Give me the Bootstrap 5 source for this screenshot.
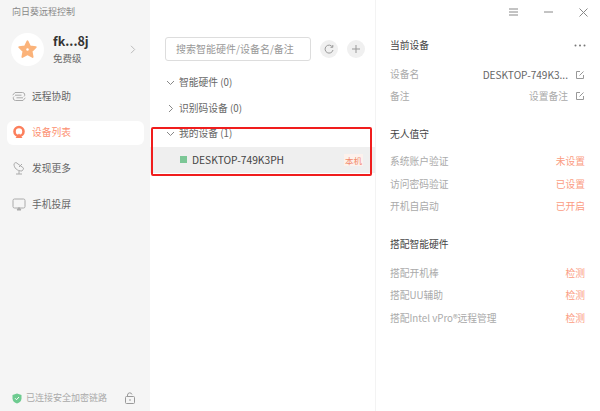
<!DOCTYPE html>
<html lang="zh">
<head>
<meta charset="utf-8">
<title>向日葵远程控制</title>
<link href="https://cdn.jsdelivr.net/npm/bootstrap@5.3.0/dist/css/bootstrap.min.css" rel="stylesheet">
<style>
html,body{width:600px;height:411px;overflow:hidden;margin:0;background:#fff}
body{font-family:"Noto Sans CJK SC","Noto Sans",sans-serif;font-size:10px;color:#555}
.shell{width:600px;height:411px;position:relative}
.side{width:150px;background:#f5f5f5;padding:6px 0 0 0}
.apptitle{font-size:9px;color:#888;padding-left:12px;line-height:12px}
.profile{padding:15px 12px 0 11px;height:57px}
.avatar{width:33px;height:33px;border-radius:50%;background:#fff;margin-right:1px}
.uname{font-size:12.5px;font-weight:700;color:#333;line-height:16px}
.ulevel{font-size:9.5px;color:#666;line-height:13px;margin-top:3px}
.chev{margin:12px 2px 0 0}
.navside{padding:0 6px 0 7px;margin-top:10px;gap:12px}
.navrow{height:24px;padding:0 0 2px 5px;gap:6px;font-size:9.75px;color:#666;border-radius:6px}
.navrow.on{background:#fff;color:#fc8f6f}
.sidefoot{height:24px;padding:0 15px 0 12px;font-size:9px;color:#aaa;margin-bottom:1px}
.mid{width:225px;padding:37px 0 0 0}
.searchbox{width:146px;height:24px;border:1px solid #ddd;border-radius:3px;padding-left:10px;font-size:10px;color:#999;line-height:22px;margin-left:15px}
.roundb{width:18px;height:18px;border-radius:50%;background:#f0f0f0;margin-left:9px}
.tree{margin-top:9px}
.treehead{height:25.5px;padding-left:16px;gap:4px;font-size:9.75px;color:#666}
.devrow{height:26px;background:#efefef;padding:0 12px 0 30px;font-size:10.25px;color:#444}
.dot{width:7px;height:7px;background:#7cc796;margin-right:5px}
.localtag{font-size:8.5px;color:#f28a6c;background:#fdf1ec;padding:0 1px;line-height:12px}
.redbox{position:absolute;left:151px;top:127px;width:221px;height:49px;border:2px solid #f01d1d;border-radius:2px}
.right{width:225px;border-left:1px solid #f3f3f3;padding:0 15px 0 14px}
.winbar{height:24px;gap:26px;margin-right:-2.5px}
.sect{font-size:9.75px;color:#444;line-height:14px}
.sect1{margin-top:14px;margin-bottom:12px}
.sect1 svg{margin-right:-1px}
.sect2{margin-top:19.75px;margin-bottom:9.75px}
.sect3{margin-top:18.75px;margin-bottom:11px}
.kv{height:22.5px;font-size:9.75px;color:#aaa}
.kv.tight{height:21.5px}
.warm{color:#fb9c82}
.devname{color:#666;font-size:10.1px}
.dim{color:#aaa}
.editic{margin-right:1px}
</style>
</head>
<body>
<div class="shell d-flex">
  <aside class="side d-flex flex-column">
    <div class="apptitle">向日葵远程控制</div>
    <div class="profile d-flex align-items-start gap-2">
      <div class="avatar d-flex align-items-center justify-content-center">
        <svg width="21" height="21" viewBox="0 0 24 24"><path d="M12 2.500l2.900 6 6.600.9-4.800 4.600 1.200 6.600L12 17.400l-5.900 3.200 1.200-6.600L2.500 9.400l6.600-.9z" fill="#fbb37a" stroke="#fbb37a" stroke-width="2" stroke-linejoin="round"/><circle cx="12" cy="12" r="1.400" fill="#fff"/></svg>
      </div>
      <div class="flex-grow-1">
        <div class="uname">fk...8j</div>
        <div class="ulevel">免费级</div>
      </div>
      <svg class="chev" width="6" height="9" viewBox="0 0 6 9" fill="none" stroke="#bbb" stroke-width="1"><path d="M1 .8l3.700 3.700L1 8.200"/></svg>
    </div>
    <nav class="navside d-flex flex-column">
      <div class="navrow d-flex align-items-center">
        <svg width="14" height="11" viewBox="0 0 14 11" fill="none" stroke="#aaa" stroke-width="1"><path d="M.7 4.200L3 1.500h7.500a2.300 2.300 0 0 1 1.500 4M3 4.200h6.500"/><path d="M13.300 6.800L11 9.500H3.500a2.300 2.300 0 0 1-1.500-4M11 6.800H4.500"/></svg>
        <span>远程协助</span>
      </div>
      <div class="navrow on d-flex align-items-center">
        <svg width="14" height="14" viewBox="0 0 14 14"><circle cx="7" cy="6.500" r="4.500" fill="none" stroke="#fc7f5c" stroke-width="2.600"/><path d="M3.500 13L7 8.500 10.500 13z" fill="#fc7f5c"/></svg>
        <span>设备列表</span>
      </div>
      <div class="navrow d-flex align-items-center">
        <svg width="14" height="15" viewBox="0 0 14 15" fill="none" stroke="#aaa" stroke-width="1"><path d="M2 3c0 4 3 7 8 7 1-1 1.500-2 1.500-3L4 1.500C3 1.800 2 2.500 2 3zM7 6l3-3M4 13h6M7 10v3"/></svg>
        <span>发现更多</span>
      </div>
      <div class="navrow d-flex align-items-center">
        <svg width="14" height="13" viewBox="0 0 14 13" fill="none" stroke="#aaa" stroke-width="1"><rect x="1" y="1" width="12" height="9" rx="1.500"/><path d="M5 12h4L7 9.500z" fill="#aaa"/></svg>
        <span>手机投屏</span>
      </div>
    </nav>
    <div class="sidefoot d-flex align-items-center mt-auto">
      <svg class="me-1" width="10" height="11" viewBox="0 0 10 11"><path d="M5 .5l4.500 1.500v3.500C9.500 8 7.500 9.800 5 10.500 2.500 9.800.5 8 .5 5.500V2z" fill="#6ecb90"/><path d="M3 5.200l1.500 1.500L7 4" fill="none" stroke="#fff" stroke-width="1"/></svg>
      <span class="flex-grow-1">已连接安全加密链路</span>
      <svg width="10" height="12" viewBox="0 0 10 12" fill="none" stroke="#999" stroke-width="1"><rect x=".5" y="4.500" width="9" height="7" rx="1"/><path d="M2.500 4.500V3a2.300 2.300 0 0 1 4.500-.5"/><path d="M5 7v2"/></svg>
    </div>
  </aside>
  <main class="mid">
    <div class="d-flex align-items-center">
      <div class="searchbox">搜索智能硬件/设备名/备注</div>
      <div class="roundb d-flex align-items-center justify-content-center">
        <svg width="10" height="10" viewBox="0 0 10 10" fill="none" stroke="#999" stroke-width="1"><path d="M8.500 3A4 4 0 1 0 9 6M8.800 1v2.300H6.500"/></svg>
      </div>
      <div class="roundb d-flex align-items-center justify-content-center">
        <svg width="10" height="10" viewBox="0 0 10 10" stroke="#999" stroke-width="1"><path d="M5 1v8M1 5h8"/></svg>
      </div>
    </div>
    <div class="tree">
      <div class="treehead d-flex align-items-center">
        <svg width="9" height="9" viewBox="0 0 9 9" fill="none" stroke="#888" stroke-width="1"><path d="M1 3l3.500 3.500L8 3"/></svg>
        <span>智能硬件 (0)</span>
      </div>
      <div class="treehead d-flex align-items-center">
        <svg width="9" height="9" viewBox="0 0 9 9" fill="none" stroke="#888" stroke-width="1"><path d="M3 1l3.500 3.500L3 8"/></svg>
        <span>识别码设备 (0)</span>
      </div>
      <div class="treehead d-flex align-items-center">
        <svg width="9" height="9" viewBox="0 0 9 9" fill="none" stroke="#888" stroke-width="1"><path d="M1 3l3.500 3.500L8 3"/></svg>
        <span>我的设备 (1)</span>
      </div>
      <div class="devrow d-flex align-items-center">
        <span class="dot"></span>
        <span class="flex-grow-1">DESKTOP-749K3PH</span>
        <span class="localtag">本机</span>
      </div>
    </div>
  </main>
  <section class="right">
    <div class="winbar d-flex align-items-center justify-content-end">
      <svg width="9" height="8" viewBox="0 0 9 8" stroke="#888" stroke-width="1"><path d="M0 1h9M0 4h9M0 7h9"/></svg>
      <svg width="9" height="2" viewBox="0 0 9 2" stroke="#888" stroke-width="1"><path d="M0 1h9"/></svg>
      <svg width="9" height="9" viewBox="0 0 9 9" stroke="#888" stroke-width="1"><path d="M.5.500l8 8M8.500.500l-8 8"/></svg>
    </div>
    <div class="sect1 d-flex align-items-center justify-content-between">
      <div class="sect">当前设备</div>
      <svg width="12" height="3" viewBox="0 0 12 3" fill="#777"><circle cx="1.500" cy="1.500" r="1"/><circle cx="6" cy="1.500" r="1"/><circle cx="10.500" cy="1.500" r="1"/></svg>
    </div>
    <div class="kv tight d-flex align-items-center justify-content-between">
      <span>设备名</span>
      <span class="d-flex align-items-center gap-2"><span class="devname">DESKTOP-749K3...</span><svg class="editic" width="8" height="8" viewBox="0 0 8 8" fill="none" stroke="#999" stroke-width="1"><path d="M7.500 4v3.500h-7v-7H4M3.500 4.500l4-4"/></svg></span>
    </div>
    <div class="kv tight d-flex align-items-center justify-content-between">
      <span>备注</span>
      <span class="d-flex align-items-center gap-2"><span class="dim">设置备注</span><svg class="editic" width="8" height="8" viewBox="0 0 8 8" fill="none" stroke="#999" stroke-width="1"><path d="M7.500 4v3.500h-7v-7H4M3.500 4.500l4-4"/></svg></span>
    </div>
    <div class="sect sect2">无人值守</div>
    <div class="kv d-flex align-items-center justify-content-between"><span>系统账户验证</span><span class="warm">未设置</span></div>
    <div class="kv d-flex align-items-center justify-content-between"><span>访问密码验证</span><span class="warm">已设置</span></div>
    <div class="kv d-flex align-items-center justify-content-between"><span>开机自启动</span><span class="warm">已开启</span></div>
    <div class="sect sect3">搭配智能硬件</div>
    <div class="kv d-flex align-items-center justify-content-between"><span>搭配开机棒</span><span class="warm">检测</span></div>
    <div class="kv d-flex align-items-center justify-content-between"><span>搭配UU辅助</span><span class="warm">检测</span></div>
    <div class="kv d-flex align-items-center justify-content-between"><span>搭配Intel vPro®远程管理</span><span class="warm">检测</span></div>
  </section>
  <div class="redbox"></div>
</div>
<script src="https://cdn.jsdelivr.net/npm/bootstrap@5.3.0/dist/js/bootstrap.bundle.min.js"></script>
</body>
</html>
